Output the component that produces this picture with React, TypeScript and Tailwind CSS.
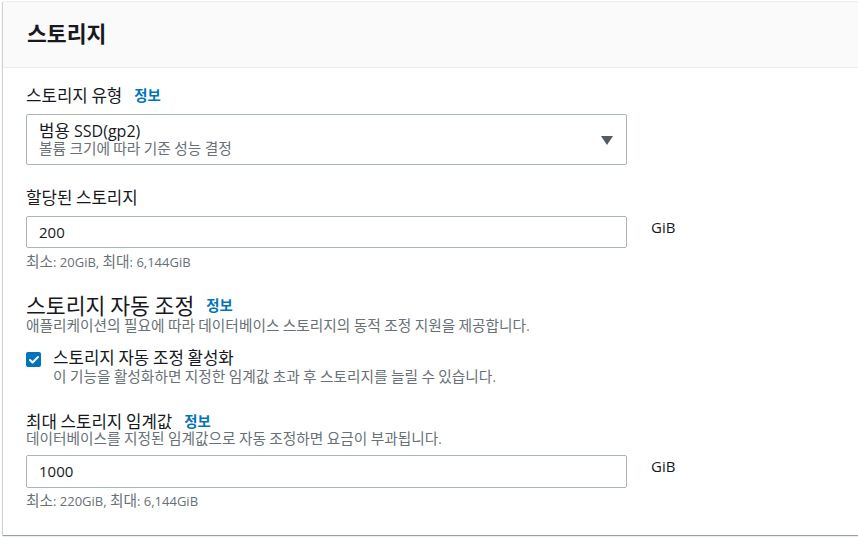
import { Check } from "lucide-react";

const font = { fontFamily: '"Open Sans", "Noto Sans CJK KR", sans-serif' };

// Hangul renders larger than the Latin text in the reference, so wrap Hangul runs
function T({ children, k = "text-[1.2em]" }: { children: string; k?: string }) {
  const parts = children.split(/([\uAC00-\uD7A3]+)/);
  return (
    <span>
      {parts.map((p, i) =>
        /[\uAC00-\uD7A3]/.test(p) ? (
          <span key={i} className={`${k} leading-none`}>
            {p}
          </span>
        ) : (
          p
        )
      )}
    </span>
  );
}

function Info() {
  return (
    <span className="ml-[12px] text-[12px] font-bold text-[#0073bb]">
      <T>정보</T>
    </span>
  );
}

export default function App() {
  return (
    <div className="h-[537px] w-[858px] overflow-hidden bg-white pl-[3px] pt-[1px]" style={font}>
      <div className="h-[534px] w-[900px] border-t border-[#eaeded] bg-white shadow-[0_1px_1px_0_rgba(0,28,36,0.3),-1px_1px_1px_0_rgba(0,28,36,0.15)]">
        {/* Header */}
        <div className="flex h-[66px] items-center border-b border-[#eaeded] bg-[#fafafa] pl-[24px]">
          <h2 className="text-[18px] font-bold leading-[22px] text-[#16191f]">
            <T>스토리지</T>
          </h2>
        </div>

        <div className="pl-[23px] pt-[18px] text-[#16191f]">
          {/* Storage type */}
          <div className="flex items-center text-[14px] leading-[22px]">
            <T>스토리지 유형</T>
            <Info />
          </div>
          <div className="mt-[6px] flex h-[51px] w-[601px] items-center justify-between rounded-[2px] border border-[#aab7b8] pl-[12px] pr-[13px]">
            <div className="flex flex-col">
              <span className="text-[16px] leading-[19px]">
                <T k="text-[1.05em]">범용 SSD(gp2)</T>
              </span>
              <span className="text-[13px] leading-[17px] text-[#687078]">
                <T k="text-[1.13em]">볼륨 크기에 따라 기준 성능 결정</T>
              </span>
            </div>
            <svg width="12" height="10" viewBox="0 0 12 10" className="mt-[2px]">
              <path d="M0 0 H12 L6 9 Z" fill="#545b64" />
            </svg>
          </div>

          {/* Allocated storage */}
          <div className="mt-[23px] text-[14px] leading-[22px]">
            <T>할당된 스토리지</T>
          </div>
          <div className="mt-[6px] flex items-start gap-[24px]">
            <div className="flex h-[32px] w-[601px] items-center rounded-[2px] border border-[#aab7b8] pl-[12px] text-[15px]">
              200
            </div>
            <span className="mt-[1px] text-[15px] leading-[20px]">GiB</span>
          </div>
          <div className="mt-[6px] text-[13px] leading-[16px] text-[#687078]">
            <T k="text-[1.13em]">최소: 20GiB, 최대: 6,144GiB</T>
          </div>

          {/* Autoscaling */}
          <div className="mt-[25px] flex items-center text-[18px] leading-[22px]">
            <T>스토리지 자동 조정</T>
            <Info />
          </div>
          <div className="text-[13px] leading-[17px] text-[#687078]">
            <T k="text-[1.13em]">애플리케이션의 필요에 따라 데이터베이스 스토리지의 동적 조정 지원을 제공합니다.</T>
          </div>
          <div className="mt-[13px] flex items-start">
            <div className="mt-[4px] flex h-[15px] w-[15px] items-center justify-center rounded-[2px] bg-[#0073bb]">
              <Check className="h-[12px] w-[12px] text-white" strokeWidth={4} />
            </div>
            <div className="ml-[12px] flex flex-col">
              <span className="text-[14px] leading-[21px]">
                <T>스토리지 자동 조정 활성화</T>
              </span>
              <span className="text-[13px] leading-[16px] text-[#687078]">
                <T k="text-[1.13em]">이 기능을 활성화하면 지정한 임계값 초과 후 스토리지를 늘릴 수 있습니다.</T>
              </span>
            </div>
          </div>

          {/* Max threshold */}
          <div className="mt-[28px] flex items-center text-[14px] leading-[20px]">
            <T>최대 스토리지 임계값</T>
            <Info />
          </div>
          <div className="-mt-[2px] text-[13px] leading-[17px] text-[#687078]">
            <T k="text-[1.13em]">데이터베이스를 지정된 임계값으로 자동 조정하면 요금이 부과됩니다.</T>
          </div>
          <div className="mt-[7px] flex items-start gap-[24px]">
            <div className="flex h-[33px] w-[601px] items-center rounded-[2px] border border-[#aab7b8] pl-[12px] text-[15px]">
              1000
            </div>
            <span className="mt-[1px] text-[15px] leading-[20px]">GiB</span>
          </div>
          <div className="mt-[5px] text-[13px] leading-[16px] text-[#687078]">
            <T k="text-[1.13em]">최소: 220GiB, 최대: 6,144GiB</T>
          </div>
        </div>
      </div>
    </div>
  );
}
